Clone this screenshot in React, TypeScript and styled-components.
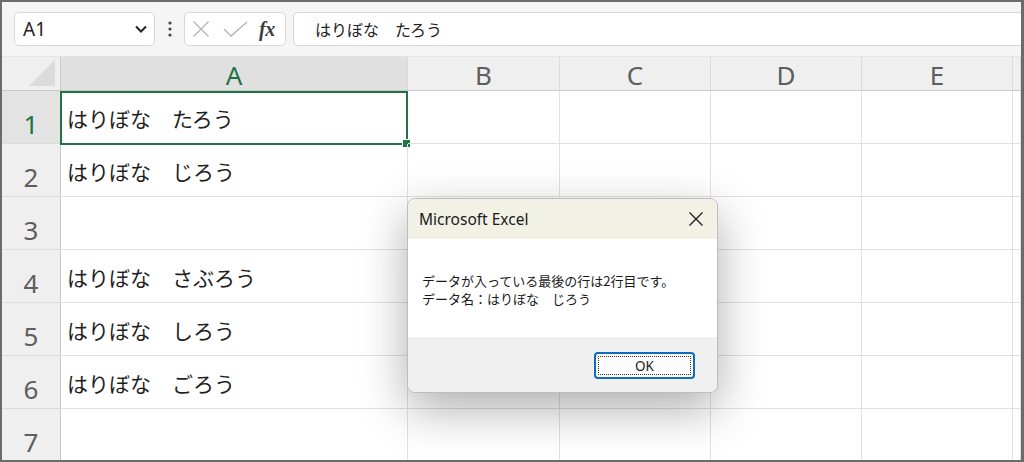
import React from 'react'
import styled, { createGlobalStyle } from 'styled-components'

const GlobalStyle = createGlobalStyle`
  html, body { margin:0; padding:0; background:#fff; }
  body { font-family: "Noto Sans", "Noto Sans CJK JP", sans-serif; }
  * { box-sizing: border-box; }
`

const columns = ['A', 'B', 'C', 'D', 'E', '']
const cells = [
  'はりぼな　たろう',
  'はりぼな　じろう',
  '',
  'はりぼな　さぶろう',
  'はりぼな　しろう',
  'はりぼな　ごろう',
  '',
]

const App = () => {
  return (
    <>
      <GlobalStyle />
      <Frame>
        <FormulaBar>
          <NameBox>
            <span>A1</span>
            <svg width="14" height="10" viewBox="0 0 14 10">
              <polyline points="2,2.5 7,7.5 12,2.5" fill="none" stroke="#222" strokeWidth="2" />
            </svg>
          </NameBox>
          <Dots width="8" height="20" viewBox="0 0 8 20">
            <circle cx="4" cy="4" r="1.6" fill="#444" />
            <circle cx="4" cy="10" r="1.6" fill="#444" />
            <circle cx="4" cy="16" r="1.6" fill="#444" />
          </Dots>
          <IconBox>
            <svg width="18" height="18" viewBox="0 0 18 18">
              <path d="M1.5 1.5 L16.5 16.5 M16.5 1.5 L1.5 16.5" stroke="#b3b3b3" strokeWidth="1.3" fill="none" />
            </svg>
            <svg width="25" height="16" viewBox="0 0 25 16">
              <polyline points="1,8 8,15 24,1" stroke="#b3b3b3" strokeWidth="1.3" fill="none" />
            </svg>
            <Fx>fx</Fx>
          </IconBox>
          <FormulaInput>はりぼな　たろう</FormulaInput>
        </FormulaBar>

        <Sheet>
          <Corner>
            <svg width="26" height="26" viewBox="0 0 26 26">
              <polygon points="26,0 26,26 0,26" fill="#dbdbdb" />
            </svg>
          </Corner>
          {columns.map((c, i) => (
            <ColHeader key={'h' + i} $selected={c === 'A'}>{c}</ColHeader>
          ))}
          {cells.map((text, r) => (
            <React.Fragment key={r}>
              <RowHeader $selected={r === 0}>{r + 1}</RowHeader>
              {columns.map((_, c) => (
                <Cell key={c} $active={r === 0 && c === 0}>
                  {c === 0 ? text : ''}
                </Cell>
              ))}
            </React.Fragment>
          ))}
        </Sheet>

        <Dialog>
          <TitleBar>
            <span>Microsoft Excel</span>
            <svg width="16" height="16" viewBox="0 0 16 16">
              <path d="M1.5 1.5 L14.5 14.5 M14.5 1.5 L1.5 14.5" stroke="#1f1f1f" strokeWidth="1.4" fill="none" />
            </svg>
          </TitleBar>
          <DialogBody>
            <div>データが入っている最後の行は2行目です。</div>
            <div>データ名：はりぼな　じろう</div>
          </DialogBody>
          <DialogFooter>
            <OkButton>
              <FocusRing>OK</FocusRing>
            </OkButton>
          </DialogFooter>
        </Dialog>
      </Frame>
    </>
  )
}

const Frame = styled.div`
  position:relative;
  width:1024px;
  height:462px;
  border:2px solid #6b6b6b;
  border-right-width:3px;
  overflow:hidden;
  background:#fff;
`

const FormulaBar = styled.div`
  display:flex;
  align-items:center;
  height:55px;
  padding:0 0 0 12px;
  background:#f5f5f5;
  border-bottom:1px solid #e4e4e4;
`

const NameBox = styled.div`
  display:flex;
  align-items:center;
  justify-content:space-between;
  width:141px;
  height:34px;
  padding:0 6px 0 8px;
  background:#fff;
  border:1px solid #d8d8d8;
  border-radius:5px;
  font-size:19px;
  color:#222;
`

const Dots = styled.svg`
  margin:0 10px 0 11px;
`

const IconBox = styled.div`
  display:flex;
  align-items:center;
  width:102px;
  height:34px;
  padding:0 0 0 7px;
  gap:13px;
  background:#fff;
  border:1px solid #d8d8d8;
  border-radius:5px;
`

const Fx = styled.span`
  font-family:"Liberation Serif", "DejaVu Serif", serif;
  font-style:italic;
  font-weight:bold;
  font-size:20px;
  color:#3c3c3c;
  margin-left:-2px;
  letter-spacing:-0.5px;
`

const FormulaInput = styled.div`
  flex:1;
  display:flex;
  align-items:center;
  height:34px;
  margin-left:7px;
  padding-left:21px;
  background:#fff;
  border:1px solid #d8d8d8;
  border-right:none;
  border-radius:5px 0 0 5px;
  font-family:"Noto Sans CJK JP", sans-serif;
  font-size:16px;
  color:#222;
`

const Sheet = styled.div`
  display:grid;
  grid-template-columns:59px 347px 152px 151px 151px 151px 1fr;
  grid-template-rows:34px repeat(7, 53px);
`

const Corner = styled.div`
  display:flex;
  align-items:flex-end;
  justify-content:flex-end;
  padding:0 5px 4px 0;
  background:#efefef;
  border-right:1px solid #c9c9c9;
  border-bottom:1px solid #c9c9c9;
`

const ColHeader = styled.div<{ $selected?: boolean }>`
  display:flex;
  align-items:center;
  justify-content:center;
  background:${p => (p.$selected ? '#e0e0e0' : '#efefef')};
  color:${p => (p.$selected ? '#1e7145' : '#5e5e5e')};
  border-right:1px solid #dadada;
  border-bottom:1px solid #c9c9c9;
  font-size:26px;
  line-height:1;
  padding-top:2px;
`

const RowHeader = styled.div<{ $selected?: boolean }>`
  display:flex;
  align-items:center;
  justify-content:center;
  padding-top:13px;
  background:${p => (p.$selected ? '#e3e3e3' : '#efefef')};
  color:${p => (p.$selected ? '#1e7145' : '#5e5e5e')};
  border-right:1px solid #c9c9c9;
  border-bottom:1px solid #dcdcdc;
  font-size:26px;
  line-height:1;
`

const Cell = styled.div<{ $active?: boolean }>`
  position:relative;
  display:flex;
  align-items:center;
  padding:1px 0 0 6px;
  border-right:1px solid #e1e1e1;
  border-bottom:1px solid #e1e1e1;
  font-family:"Noto Sans CJK JP", sans-serif;
  font-size:21px;
  color:#1f1f1f;
  white-space:nowrap;

  ${p => p.$active && `
    &::before {
      content:'';
      position:absolute;
      left:-1px; top:0; right:-1px; bottom:-2px;
      border:2px solid #217346;
    }
    &::after {
      content:'';
      position:absolute;
      right:-4px; bottom:-5px;
      width:7px; height:7px;
      background:#217346;
      border:1px solid #fff;
    }
  `}
`

const Dialog = styled.div`
  position:absolute;
  left:405px;
  top:196px;
  width:311px;
  height:195px;
  display:flex;
  flex-direction:column;
  border:1px solid #bdbdbd;
  border-radius:8px;
  overflow:hidden;
  box-shadow:0 16px 48px rgba(0,0,0,0.32);
  background:#f0f0f0;
`

const TitleBar = styled.div`
  display:flex;
  align-items:center;
  justify-content:space-between;
  height:40px;
  padding:0 13px 0 11px;
  background:#f2f1e6;
  font-size:15.5px;
  color:#1a1a1a;
`

const DialogBody = styled.div`
  height:98px;
  padding:33px 0 0 14px;
  background:#fff;
  font-family:"Noto Sans CJK JP", sans-serif;
  font-size:13px;
  line-height:18px;
  color:#1a1a1a;
`

const DialogFooter = styled.div`
  flex:1;
  display:flex;
  justify-content:flex-end;
  align-items:flex-start;
  padding:15px 22px 0 0;
  background:#f0f0f0;
`

const OkButton = styled.div`
  width:101px;
  height:27px;
  padding:2px;
  background:#fdfdfd;
  border:2px solid #0f6cbd;
  border-radius:4px;
`

const FocusRing = styled.div`
  height:100%;
  display:flex;
  align-items:center;
  justify-content:center;
  border:1px dotted #333;
  font-size:13.5px;
  color:#1a1a1a;
`

export default App
